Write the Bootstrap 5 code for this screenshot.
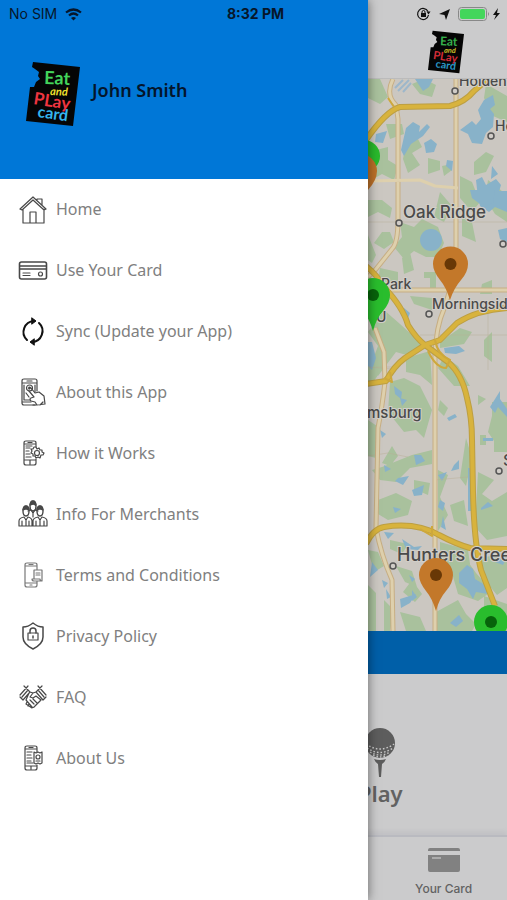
<!DOCTYPE html>
<html lang="en">
<head>
<meta charset="utf-8">
<meta name="viewport" content="width=device-width, initial-scale=1">
<title>Eat and Play Card</title>
<link href="https://cdn.jsdelivr.net/npm/bootstrap@5.3.0/dist/css/bootstrap.min.css" rel="stylesheet">
<style>
  body { font-family: "Noto Sans", "Open Sans", sans-serif; background: #cbcbcc; }
  .app-shell { min-height: 100vh; }
  .app-top { height: 79px; padding-top: 30px; border-bottom: 1px solid #bbb; }
  .top-logo { width: 36px; height: 44px; }
  .tab-slot { width: 25%; }
  .map-area { flex: 1 1 0; min-height: 0; overflow: hidden; background: #cac6c0; }
  .map-area svg { display: block; width: 100%; height: 100%; }
  .map-area text { font-family: Inter, "Liberation Sans", sans-serif; font-weight: 500; fill: #4a4a4a; stroke: #d2cfc9; stroke-width: 2px; paint-order: stroke; }
  .blue-strip { height: 43px; background: #005fa8; }
  .play-panel { height: 161px; padding-top: 52px; }
  .play-link { color: #626262; font-size: 22px; line-height: 30px; font-weight: 600; }
  .tab-strip { height: 65px; border-top: 2px solid #b9bac0; box-shadow: 0 -4px 4px #c2c2c5; }
  .tab-link { color: #626262; font: 500 12px/16px Inter, "Liberation Sans", sans-serif; padding-top: 10px; gap: 8px; }
  .drawer { width: 72.5%; z-index: 2; box-shadow: 0 0 10px rgba(0,0,0,.5); }
  .drawer-head { height: 179px; background: #0077d7; padding: 8px 26px 0; }
  .drawer-logo { width: 54px; height: 64px; }
  .logo-word { font-family: Lato, "Noto Sans", sans-serif; font-weight: 700; }
  .user-name { font-size: 18px; line-height: 24px; font-weight: 600; color: #04152b; }
  .menu-link { height: 61px; padding: 0 18px 2px; gap: 8px; color: #808080; font-size: 16px; line-height: 24px; }
  .menu-link svg { width: 30px; height: 30px; flex: none; fill: none; stroke: #484848; stroke-width: 1.2; stroke-linejoin: round; stroke-linecap: round; }
  .menu-link .sync-icon { stroke: #111; stroke-width: 2; }
  .menu-link .pale-icon { stroke: #777; }
  .status-line { z-index: 3; height: 28px; padding: 0 5px 0 9px; font: 400 14px/28px Inter, "Liberation Sans", sans-serif; color: #07162a; }
  .status-part { flex: 1 1 0; }
</style>
<script src="https://cdn.jsdelivr.net/npm/bootstrap@5.3.0/dist/js/bootstrap.bundle.min.js"></script>
</head>
<body>
<div class="app-shell position-relative d-flex flex-column overflow-hidden">
  <header class="app-top d-flex justify-content-end">
    <div class="tab-slot text-center ps-1">
      <svg class="top-logo" viewBox="0 0 54 64" role="img" aria-label="Eat and Play Card">
        <path d="M7 0 54 5 47 64 0 59 4 25 8 25 10 20 14 17 12 14 13 10 9 7 6 5Z" fill="#050505"/>
        <g class="logo-word">
          <text transform="translate(18 22) rotate(2)" font-size="18" fill="#36b04c">Eat</text>
          <text transform="translate(24 33) rotate(2)" font-size="11" font-style="italic" fill="#cfc027">and</text>
          <text transform="translate(7 42) rotate(9)" font-size="17" fill="#d02c37">PLay</text>
          <text transform="translate(11 55) rotate(8)" font-size="16" fill="#2b96c6">card</text>
        </g>
      </svg>
    </div>
  </header>

  <section class="map-area" aria-label="Map">
    <svg viewBox="0 79 507 552" preserveAspectRatio="xMaxYMid slice">
      <rect x="0" y="79" width="507" height="552" fill="#cbc7c1"/>
      <g fill="#a9c19d">
        <path d="M368 79h12l8 18-8 7-12-6zM424 79l12 6-4 12-12-3-8-10zM386 124h16l2 10-14 5zM376 150l12-3v13l10 6-4 14-12-6-14 8v-24zM406 143l12-4 4 8-10 6 8 12-12 8-5-14zM428 158l12 3v9l-12 4zM442 166l10-2v6l-8 6zM474 162l12-10 8 4-8 16-12 3zM486 84l21 12v26l-14-6-9-18zM460 176l12 6 8 20-8 10-12-14zM488 180l19 15v27l-12-8-10-16z"/>
        <path d="M368 200h14l10 8-2 10-12-6-10 5zM382 232h8l4 10-10 7-10-6zM368 235l8 20-4 8-4-3zM400 222l14 5 8-8 16 8 6 16-6 14h-12l-12-6-10 8-10-12 8-10zM402 258l8-6 4 18-10 4zM424 272h12v18h-6v-12h-6zM440 192l12 14-8 16-10-5zM380 268l18 4v12l-20-4zM462 216l10 6 4 20-14-6zM482 284l10-4v14h-12zM410 296l22 2v12l-18-6z"/>
        <path d="M384 310l16 14 24 22-14 10-14-4-18 24-6-14 6-16-10-14zM390 382l14-4 16 8 12 24-8 28-8-8-12 2-16-20zM368 348l12 24-8 12-4-2zM406 358l24-7 2 34-12-10-14-3zM440 342l20-14 12 4-8 12-24 4zM444 356l14 10 12 20h-16l-16-18zM484 340l8-8v30l-8-6zM440 400l8 8-4 8-6-6zM478 395l8 4-8 6zM492 402h15v48h-7l-12-18 4-16z"/>
        <path d="M368 420l12 8-4 30-8-2zM392 446l6 10-8 10-8-3zM382 467l30-12 20-5v14l-22 4-14 14-16-2-8-10zM378 500l18-7 16 8-4 14-20 5-10-6zM414 480l16 3-2 12-14-6zM438 470l10 5-8 22 8 18-10 16zM450 505l14-5 4 26-14-5zM466 438l6 20-6 28-6-8zM478 472l16 8-12 14 10 7 15-9v44l-20 4-12-13zM480 435h6v10h-6zM494 434h13v18h-13zM440 542l28 8 2 14-20 8-10-10z"/>
        <path d="M368 550l10 2 6 14-10 6zM390 540l18 4-6 10-12-5zM396 566l16 5 5 16-12-5zM412 580l10 14-7 8-12-10zM368 585l8 8v38h-8zM384 600l10 10-4 21h-6zM400 612l20 5 6 14h-20zM436 612l22-12 8 14 10 10-4 7h-37zM450 566l16-7 10 14 16 18-14 10-20-7zM480 558l27-5v35l-10 7-15-18zM484 596l23 8v27h-23z"/>
      </g>
      <g fill="#88b2c9">
        <path d="M415 79h18l-4 8-6 4zM406 128l7-6 7 4-1 6 8-8 3 3-7 9-12 8-7 12-3-6zM484 100l9-5 2 10-5 4 4 5-1 13-7 6-4 11-10-1-4-9-8-4 12-9 4 4 5-6-3-9zM424 143l7-4 6 5-3 8-8 1-1-6zM376 134l11-3-4 12-8-1zM447 160l6 1-1 10-6-5zM476 180l6-3 4 8 10-6 5 6-3 10 9 5v12l-12-5-6 5-9-6-3-17zM492 166l6 8-7 5zM475 191h32v16l-16-2-13-6z"/>
        <circle cx="431" cy="240" r="11"/>
        <path d="M470 190h25l-2 13-9 4-12-9zM498 230l9-2v14l-7-3zM368 297h6v8h-6zM404 308l6 5-3 8-6-6zM444 348l15-2 6 5-9 3-11-1zM368 342h4l4 16-4 12-4-4zM394 386l8 6-1 7-6-5zM400 398l7 2-5 6zM490 407l10-16v8l7 10v8l-9-10-3 6zM447 418l8-4 2 3-8 4zM483 438h10v3h-10zM380 430l6 4-4 4zM384 465l7 4-6 3zM398 478l11-2-6 9-8-4zM414 455h7l4 6-9 4zM412 490l12-5-2 10-8 1zM454 465l5-5v9l-8 2zM438 475l9-3-5 9zM393 507l8 2-6 4zM440 500l5 3-2 8-5-4zM468 468h3v43h-3zM481 508l7-6 5 4-12 4zM443 516l3 14-5-3zM384 532l10 1-6 6zM402 539l12 8 8-1-4 4-12-1z"/>
        <path d="M459 573l8-8 6 4 2 10 10 6 3 9-12-2-3 7-6-10-8-6zM496 556l7-4 4 5-4 8-8-3zM372 562l6 8-8 7zM386 589l5 8-4 2zM400 599l16-5-6 9-9 5zM382 580l6 3-4 5zM412 590l5 7-5 4zM450 623l9-8 4 6-7 6zM409 575l6 4-3 3z"/>
      </g>
      <path d="M395 88l8-8m-5 11 11-11m-6 12 8-9" stroke="#9db7ca" stroke-width="2"/>
      <g fill="none" stroke-linejoin="round">
        <g stroke="#b7ad94" stroke-width="1">
          <path d="M368 222h139M376 367h20M420 335h87M368 367l24 2M488 310v60M434 480l34-3M368 456l20-3 20 4" opacity=".45"/>
        </g>
        <g stroke="#c7ae83" stroke-width="5">
          <path d="M393 79q-8 16 3 26l2 14v100q0 24-6 30l-16 20-8 8M456 79v182q-4 24-12 48-8 18-9 46v276M388 290h119M375 328q6 16 9 24l1 30q-3 26-7 46l-2 100q5 27 16 52l1 51"/>
        </g>
        <path stroke="#ded0ad" stroke-width="3" d="M393 79q-8 16 3 26l2 14v100q0 24-6 30l-16 20-8 8M456 79v182q-4 24-12 48-8 18-9 46v276M388 290h119M375 328q6 16 9 24l1 30q-3 26-7 46l-2 100q5 27 16 52l1 51M368 181l52-1 15 6 23 2"/>
        <g stroke="#bd9f42" stroke-width="6">
          <path d="M366 140q20-29 34-33l50-1q15-4 24-15l15-13M366 266q12 10 17 20 20 21 25 39 8 13 17 20l23 17q14 12 19 36 5 20 5 42l1 52q1 50 8 78l14 36M366 384l20-3q8-15 19-23l20-13 15-5 17-17q20-13 50-15M366 544q7-15 18-17 32-5 55 8 17 9 31 13l37 1"/>
        </g>
        <path stroke="#d8b33d" stroke-width="4" d="M366 140q20-29 34-33l50-1q15-4 24-15l15-13M366 266q12 10 17 20 20 21 25 39 8 13 17 20l23 17q14 12 19 36 5 20 5 42l1 52q1 50 8 78l14 36M366 384l20-3q8-15 19-23l20-13 15-5 17-17q20-13 50-15M366 544q7-15 18-17 32-5 55 8 17 9 31 13l37 1"/>
        <path stroke="#cea83c" stroke-width="2" d="M435 340q2 14 15 20l-4 8q-10 0-18-17M420 529l12 7v-10M384 378l8 4-2-10M388 98l6 9"/>
      </g>
      <g fill="#d0ccc7" stroke="#555" stroke-width="1.5">
        <circle cx="455" cy="91" r="3"/><circle cx="491" cy="136" r="3"/><circle cx="399" cy="223" r="3"/><circle cx="503" cy="244" r="3"/><circle cx="429" cy="314" r="3"/><circle cx="499" cy="471" r="3"/><circle cx="393" cy="566" r="3"/>
      </g>
      <g font-size="14">
        <text x="459" y="86">Holden</text><text x="495" y="131">He</text>
        <text x="403" y="218" font-size="17">Oak Ridge</text>
        <text x="381" y="289">Park</text><text x="376" y="322">U</text>
        <text x="432" y="309">Morningside</text>
        <text x="367" y="418" font-size="15">msburg</text>
        <text x="503" y="466" font-size="16">S</text>
        <text x="397" y="561" font-size="18">Hunters Creek</text>
      </g>
      <g>
        <circle cx="364" cy="156" r="16" fill="#29b92c"/>
        <path d="M360 154a17 17 0 0 1 17 17q0 9-9 19h-8z" fill="#bb7029"/>
        <path d="M450 300q-4-13-10-20-7-9-7-16a17 17 0 0 1 35 0q0 8-7 16-7 8-11 20z" fill="#c3782a"/><circle cx="450.500" cy="264" r="6" fill="#683806"/>
        <path d="M436 611q-4-13-10-20-7-9-7-16a17 17 0 0 1 34 0q0 8-7 16-7 8-10 20z" fill="#c3782a"/><circle cx="436" cy="575" r="6" fill="#683806"/>
        <path d="M373 331q-4-13-10-20-7-9-7-16a17 17 0 0 1 34 0q0 8-7 16-7 8-10 20z" fill="#29bd2d"/><circle cx="373" cy="295" r="6" fill="#07630b"/>
        <circle cx="491" cy="622" r="17" fill="#29bd2d"/><circle cx="491" cy="622" r="6" fill="#07630b"/>
      </g>
    </svg>
  </section>

  <div class="blue-strip"></div>

  <section class="play-panel d-flex justify-content-end">
    <a href="#play" class="play-link w-50 d-flex flex-column align-items-center text-decoration-none">
      <svg width="32" height="52" viewBox="0 0 32 52" aria-hidden="true">
        <circle cx="16" cy="17" r="15" fill="#5d5d5d"/>
        <g fill="none" stroke="#c8c8c8" stroke-width="1.400" stroke-dasharray="1.600 2"><path d="M2 18q14 10 28 0M3 22q13 9 26 0M6 26q10 6 20 0M9 29q7 4 14 0"/></g>
        <path d="M10 33q6 2 12 0-1 3-4 5l-1 13h-2l-1-13q-3-2-4-5z" fill="#5d5d5d"/>
      </svg>
      <span>Play</span>
    </a>
  </section>

  <nav class="tab-strip d-flex justify-content-end" aria-label="Tabs">
    <a href="#card" class="tab-link tab-slot d-flex flex-column align-items-center text-decoration-none">
      <svg width="32" height="26" viewBox="0 0 32 26" fill="#818181" aria-hidden="true"><path d="M0 4V3Q0 1 2 1H30Q32 1 32 3V4ZM0 8H32V23Q32 25 30 25H2Q0 25 0 23Z"/><path d="M4 11h9" stroke="#bbb" stroke-width="1.500"/></svg>
      <span>Your Card</span>
    </a>
  </nav>

  <aside class="drawer position-absolute top-0 start-0 h-100 bg-white">
    <div class="drawer-head d-flex align-items-center">
      <svg class="drawer-logo me-2" viewBox="0 0 54 64" role="img" aria-label="Eat and Play Card">
        <path d="M7 0 54 5 47 64 0 59 4 25 8 25 10 20 14 17 12 14 13 10 9 7 6 5Z" fill="#050505"/>
        <g class="logo-word">
          <text transform="translate(18 22) rotate(2)" font-size="18" fill="#43d45b">Eat</text>
          <text transform="translate(24 33) rotate(2)" font-size="11" font-style="italic" fill="#f0e02d">and</text>
          <text transform="translate(7 42) rotate(9)" font-size="17" fill="#ef3540">PLay</text>
          <text transform="translate(11 55) rotate(8)" font-size="16" fill="#34b5ed">card</text>
        </g>
      </svg>
      <span class="user-name ps-1 pb-2">John Smith</span>
    </div>
    <nav aria-label="Main menu">
      <ul class="list-unstyled m-0">
        <li><a class="menu-link d-flex align-items-center text-decoration-none" href="#home">
          <svg viewBox="0 0 30 30" aria-hidden="true"><path d="M2 15 15 3 28 15M2 15l2 1L15 6l11 10 2-1M5 15v14h21V15M12 29V18h6v11M19 6V5h5v6"/></svg>Home</a></li>
        <li><a class="menu-link d-flex align-items-center text-decoration-none" href="#use-card">
          <svg viewBox="0 0 30 30" aria-hidden="true"><rect x="1.500" y="7" width="27" height="17" rx="2" stroke-width="1.600"/><path d="M2 11h26M2 14h26" stroke-width="1.600"/><path d="M5 18h7M5 20.500h7"/><circle cx="22.500" cy="19" r="2"/></svg>Use Your Card</a></li>
        <li><a class="menu-link d-flex align-items-center text-decoration-none" href="#sync">
          <svg class="sync-icon" viewBox="0 0 30 30" aria-hidden="true"><path d="M9 24A11 11 0 0 1 16 5M21 7a11 11 0 0 1-7 19"/><path d="m14 2 4 3-4 3zM16 23l-4 3 4 3z" fill="#111" stroke-width="1"/></svg>Sync (Update your App)</a></li>
        <li><a class="menu-link d-flex align-items-center text-decoration-none" href="#about-app">
          <svg viewBox="0 0 30 30" aria-hidden="true"><path d="M17 28H6q-2 0-2-2V4q0-2 2-2h11q2 0 2 2v10M4 6h15M9 4h5M4 25h9M6 8v15h6M17 8v7"/><circle cx="11.500" cy="11" r="3"/><circle cx="11.500" cy="11" r=".8"/><path d="m11 14 5 6-3 1q-2 1 0 3l4 1 2 3 8-1-1-8-5-4-4 1-4-5q-2-1-2 1M15 28h4M22 28l3-3M8 16l3 4"/></svg>About this App</a></li>
        <li><a class="menu-link d-flex align-items-center text-decoration-none" href="#how">
          <svg viewBox="0 0 30 30" aria-hidden="true"><path d="M18 9V5q0-2-2-2H8Q6 3 6 5v20q0 2 2 2h8q2 0 2-2v-4M6 6h12M10 4.500h4M6 22h12M12 22v4M8 10h4M8 13h3M8 16h4M8 19h5M8 8h6"/><path d="m18 9 1 2 2-1 1 2 2 0 0 2 2 1-1 2-2 0-1 3-2-1-2 1-1-2-2 0 0-2-2-1 1-2-1-2 2 0 1-2z"/><circle cx="19" cy="15" r="2.500"/></svg>How it Works</a></li>
        <li><a class="menu-link d-flex align-items-center text-decoration-none" href="#merchants">
          <svg viewBox="0 0 30 30" aria-hidden="true"><path d="M12 7q0-5 3-5t3 5q0 5-3 5t-3-5M12 6l4-2 2 3M5 12q0-5 3-5t3 5-3 5-3-5M19 12q0-5 3-5t3 5-3 5-3-5" stroke-width="1.400"/><path d="M12 6q1-4 3-4t3 4l-3-1zM5 11q1-4 3-4t3 4l-3-1zM19 11q1-4 3-4t3 4l-3-1z" fill="#484848"/><path d="M10 12l3-1 2 3 2-3 3 1M15 14v4M1 27v-5q0-3 5-4l2 3 2-3q4 1 4 4v5M15 27v-5q0-3 5-4l2 3 2-3q5 1 5 4v5M1 27h28M4 22v5M8 21v6M11 22v5M18 22v5M22 21v6M26 22v5"/></svg>Info For Merchants</a></li>
        <li><a class="menu-link d-flex align-items-center text-decoration-none" href="#terms">
          <svg class="pale-icon" viewBox="0 0 30 30" aria-hidden="true"><path d="M19 10V5q0-2-2-2H9Q7 3 7 5v20q0 2 2 2h8q2 0 2-2v-4M7 6h12M11 4.500h4M7 23h12M12 25h2M16 10h8v8M16 10v9M14 19h8q0 2 2 2V10M14 19q0 2 2 2h7M18 13h4M18 15h4"/></svg>Terms and Conditions</a></li>
        <li><a class="menu-link d-flex align-items-center text-decoration-none" href="#privacy">
          <svg viewBox="0 0 30 30" aria-hidden="true"><path d="M15 2q5 4 10 4v10q0 7-10 12Q5 23 5 16V6q5 0 10-4z" stroke-width="1.500"/><rect x="10" y="12" width="10" height="7"/><path d="M12 12v-2q0-3 3-3t3 3v2M15 15v2" stroke-width="1.500"/></svg>Privacy Policy</a></li>
        <li><a class="menu-link d-flex align-items-center text-decoration-none" href="#faq">
          <svg viewBox="0 0 30 30" aria-hidden="true"><path d="m6 4 6 6-7 8-3-3M2 13l8-9M4 15l6-7M24 4l-6 6 7 8 3-3M28 13l-8-9M26 15l-6-7M12 10l3 1 3-1M11 11l-3 7 6 7q2 1 3-1l6-6M15 11l-3 4 3 1 3-2 5 4M12 18l4 4M15 17l4 4M9 20l-1 2 6 4M11 22l-1 2"/></svg>FAQ</a></li>
        <li><a class="menu-link d-flex align-items-center text-decoration-none" href="#about">
          <svg viewBox="0 0 30 30" aria-hidden="true"><path d="M19 9V5q0-2-2-2H9Q7 3 7 5v20q0 2 2 2h8q2 0 2-2v-3M7 6h12M11 4.500h4M7 23h12M13 23v3M9 9h5M9 12h4M9 15h5M9 18h4M9 20h6"/><path d="m16 9 2 1 2-1 2 1 2-1v11l-2 1-2-1-2 1-2-1z"/><circle cx="20" cy="14" r="2"/><path d="M18 18h4"/></svg>About Us</a></li>
      </ul>
    </nav>
  </aside>

  <div class="status-line position-absolute top-0 start-0 w-100 d-flex align-items-center">
    <div class="status-part d-flex align-items-center gap-2">No SIM
      <svg width="17" height="13" viewBox="0 0 17 13" fill="none" stroke="#07162a" stroke-width="2.200" role="img" aria-label="Wi-Fi"><path d="M1 4.500q7.500-6 15 0M4 7.500q4.500-4 9 0"/><path d="M8.500 12.500 6 10q2.500-2 5 0z" fill="#07162a" stroke="none"/></svg>
    </div>
    <div class="fw-bold">8:32 PM</div>
    <div class="status-part d-flex align-items-center justify-content-end">
      <svg width="86" height="16" viewBox="0 0 86 16" role="img" aria-label="Rotation lock, location, battery charging"><path d="M12 5.500A5.500 5.500 0 1 0 12.500 9" fill="none" stroke="#111" stroke-width="1.200"/><path d="M10.500 5.500h4l-2 3z" fill="#111"/><path d="M5 7h5v4H5z" fill="#111"/><path d="M6 7V6q0-1.500 1.500-1.500T9 6v1" fill="none" stroke="#111"/><path d="M23 8 34 3 30 14 28.500 9z" fill="#111"/><rect x="42.500" y="1.500" width="28" height="13" rx="3" fill="none" stroke="#888"/><rect x="44" y="3" width="25" height="10" rx="2" fill="#43d65b"/><path d="M72 6v4q2-2 0-4" fill="#888"/><path d="M82 2 77 9h3l-2 5 6-7h-3z" fill="#111"/></svg>
    </div>
  </div>
</div>
</body>
</html>
